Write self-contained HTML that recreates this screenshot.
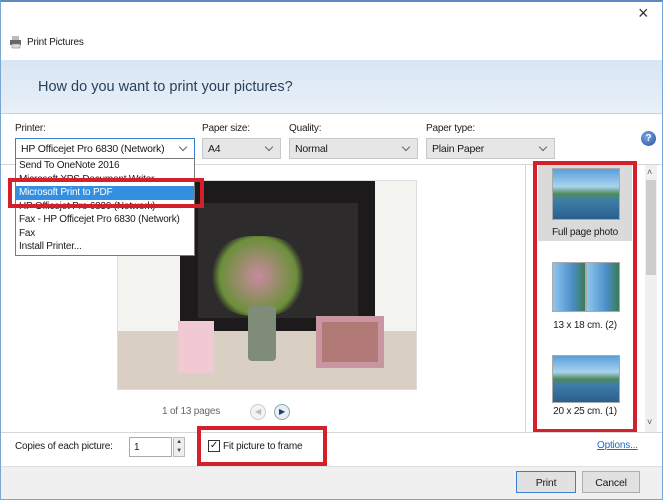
<!DOCTYPE html>
<html><head><meta charset="utf-8"><style>
*{box-sizing:border-box;margin:0;padding:0}
body{width:663px;height:500px;overflow:hidden;background:#fff;font-family:"Liberation Sans",sans-serif;font-size:10px;letter-spacing:-0.2px;color:#1a1a1a;position:relative}
.a{position:absolute;white-space:nowrap}
.sel{position:absolute;height:21px;background:#e6e6e6;border:1px solid #c8c8c8;padding:4px 0 0 5px;font-size:10.5px;white-space:nowrap}
.sel::after{content:"";position:absolute;right:8px;top:5px;width:5px;height:5px;border-right:1px solid #666;border-bottom:1px solid #666;transform:rotate(45deg)}
.lbl{position:absolute;top:123px;font-size:10px;color:#222}
.thumb{position:absolute;border:1px solid #aaa;background:linear-gradient(#5a9fd8 0%,#a9d3ef 35%,#4f8a5a 50%,#3f7ea8 62%,#2a5f8c 100%)}
.cap{position:absolute;width:94px;text-align:center;font-size:10px;left:538px}
.btn{position:absolute;height:22px;border:1px solid #adadad;background:#e1e1e1;text-align:center;padding-top:5px;font-size:10.5px}
.red{position:absolute;border:4px solid #d3202a}
</style></head><body>
<div class="a" style="left:0;top:0;width:663px;height:500px;border:1px solid #7aa6d4;border-top:2px solid #5b8cc0"></div>
<div class="a" style="left:638px;top:3px;font-size:18px;color:#333">×</div>
<svg class="a" style="left:9px;top:35px" width="14" height="14" viewBox="0 0 14 14"><rect x="3" y="1" width="7" height="4" fill="#bbb"/><rect x="1" y="5" width="11" height="5" fill="#666"/><rect x="3" y="9" width="8" height="4" fill="#ddd" stroke="#888" stroke-width=".6"/></svg>
<div class="a" style="left:27px;top:37px;font-size:10px">Print Pictures</div>
<div class="a" style="left:1px;top:60px;width:661px;height:54px;background:linear-gradient(#d8e5f3,#e8f0f8);border-bottom:1px solid #c5d3e2"></div>
<div class="a" style="left:38px;top:79px;font-size:14.5px;letter-spacing:0;color:#2a3f58">How do you want to print your pictures?</div>
<div class="lbl" style="left:15px">Printer:</div>
<div class="lbl" style="left:202px">Paper size:</div>
<div class="lbl" style="left:289px">Quality:</div>
<div class="lbl" style="left:426px">Paper type:</div>
<div class="sel" style="left:15px;top:138px;width:180px;background:#fff;border-color:#3c7fd0">HP Officejet Pro 6830 (Network)</div>
<div class="sel" style="left:202px;top:138px;width:79px">A4</div>
<div class="sel" style="left:289px;top:138px;width:129px">Normal</div>
<div class="sel" style="left:426px;top:138px;width:129px">Plain Paper</div>
<div class="a" style="left:641px;top:131px;width:15px;height:15px;border-radius:50%;background:radial-gradient(circle at 40% 35%,#7ea7e6,#24509e);color:#fff;font-size:10px;font-weight:bold;text-align:center;line-height:15px">?</div>
<div class="a" style="left:1px;top:164px;width:661px;height:1px;background:#d6d6d6"></div>
<div class="a" style="left:525px;top:165px;width:1px;height:267px;background:#d6d6d6"></div>
<div class="a" style="left:117px;top:180px;width:300px;height:210px;background:#f3f3f0;border:1px solid #ddd;overflow:hidden">
<div class="a" style="left:62px;top:0;width:195px;height:155px;background:#1c1a1b"></div>
<div class="a" style="left:80px;top:22px;width:160px;height:115px;background:#2e2b2c"></div>
<div class="a" style="left:0;top:150px;width:300px;height:60px;background:#d9cfc2"></div>
<div class="a" style="left:90px;top:55px;width:100px;height:80px;border-radius:45%;background:radial-gradient(circle,#c98aa0,#6c8f3a 60%,transparent 72%)"></div>
<div class="a" style="left:130px;top:125px;width:28px;height:55px;background:#7f8c78;border-radius:4px"></div>
<div class="a" style="left:60px;top:140px;width:36px;height:52px;background:#f1c9d2"></div>
<div class="a" style="left:198px;top:135px;width:68px;height:52px;background:#b27a76;border:6px solid #c995a0"></div>
</div>
<div class="a" style="left:15px;top:158px;width:180px;height:98px;background:#fff;border:1px solid #7a7a7a;font-size:10px;line-height:13.5px;padding-left:3px;overflow:hidden">
<div>Send To OneNote 2016</div><div>Microsoft XPS Document Writer</div>
<div style="background:#3390e0;color:#fff;margin-left:-3px;padding-left:3px">Microsoft Print to PDF</div>
<div>HP Officejet Pro 6830 (Network)</div><div>Fax - HP Officejet Pro 6830 (Network)</div><div>Fax</div><div>Install Printer...</div></div>
<div class="red" style="left:8px;top:178px;width:196px;height:30px"></div>
<div class="a" style="left:162px;top:406px;color:#666">1 of 13 pages</div>
<div class="a" style="left:250px;top:404px;width:16px;height:16px;border-radius:50%;border:1px solid #ccc;background:#f3f3f3;color:#bbb;font-size:8px;text-align:center;line-height:14px">◀</div>
<div class="a" style="left:274px;top:404px;width:16px;height:16px;border-radius:50%;border:1px solid #8aa;background:#e8eef4;color:#1d3f6a;font-size:8px;text-align:center;line-height:14px">▶</div>
<div class="a" style="left:538px;top:165px;width:94px;height:76px;background:#dadada"></div>
<div class="thumb" style="left:552px;top:168px;width:68px;height:52px"></div>
<div class="cap" style="top:227px">Full page photo</div>
<div class="thumb" style="left:552px;top:262px;width:34px;height:50px;background:linear-gradient(90deg,#8fc6ee,#4b8fc7 60%,#3a7a5a)"></div>
<div class="thumb" style="left:586px;top:262px;width:34px;height:50px;background:linear-gradient(90deg,#8fc6ee,#4b8fc7 60%,#3a7a5a)"></div>
<div class="cap" style="top:320px">13 x 18 cm. (2)</div>
<div class="thumb" style="left:552px;top:355px;width:68px;height:48px"></div>
<div class="cap" style="top:406px">20 x 25 cm. (1)</div>
<div class="red" style="left:533px;top:161px;width:104px;height:272px"></div>
<div class="a" style="left:645px;top:165px;width:12px;height:267px;background:#f0f0f0"></div>
<div class="a" style="left:646px;top:180px;width:10px;height:95px;background:#cdcdcd"></div>
<div class="a" style="left:647px;top:167px;font-size:9px;color:#555">˄</div>
<div class="a" style="left:647px;top:417px;font-size:9px;color:#555">˅</div>
<div class="a" style="left:1px;top:432px;width:661px;height:1px;background:#d6d6d6"></div>
<div class="a" style="left:15px;top:441px">Copies of each picture:</div>
<div class="a" style="left:129px;top:437px;width:43px;height:20px;border:1px solid #aaa;padding:4px 0 0 4px">1</div>
<div class="a" style="left:173px;top:437px;width:12px;height:20px;border:1px solid #bbb;background:#eee;font-size:6px;line-height:9px;text-align:center;color:#444">▲<br>▼</div>
<div class="a" style="left:208px;top:440px;width:12px;height:12px;border:1px solid #333;font-size:10px;line-height:10px;text-align:center">✓</div>
<div class="a" style="left:223px;top:441px">Fit picture to frame</div>
<div class="red" style="left:197px;top:426px;width:130px;height:40px"></div>
<div class="a" style="left:597px;top:440px;color:#1a6bc8;text-decoration:underline">Options...</div>
<div class="a" style="left:1px;top:466px;width:661px;height:33px;background:#f0f0f0;border-top:1px solid #e0e0e0"></div>
<div class="btn" style="left:516px;top:471px;width:60px;border:1px solid #3c7fd0">Print</div>
<div class="btn" style="left:582px;top:471px;width:58px">Cancel</div>
</body></html>
